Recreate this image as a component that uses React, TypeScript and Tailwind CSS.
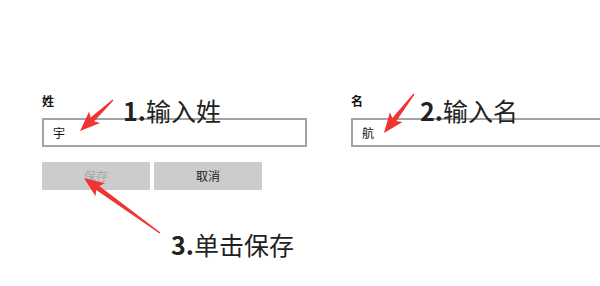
import React from 'react';

const cjk = { fontFamily: '"Microsoft YaHei", "Noto Sans CJK SC", "Noto Sans", sans-serif' };

type Pt = [number, number];

// tapered arrow from tail to tip, drawn as one polygon
function arrowPoints(tail: Pt, tip: Pt, headLen = 17, headW = 8, shaftW = 2.6) {
  const [x1, y1] = tail;
  const [x2, y2] = tip;
  const L = Math.hypot(x2 - x1, y2 - y1);
  const ux = (x2 - x1) / L;
  const uy = (y2 - y1) / L;
  const nx = -uy;
  const ny = ux;
  const bx = x2 - ux * headLen;
  const by = y2 - uy * headLen;
  const bx2 = x2 - ux * (headLen + 3);
  const by2 = y2 - uy * (headLen + 3);
  const pts: Pt[] = [
    [x1 + nx * 0.6, y1 + ny * 0.6],
    [bx + nx * shaftW, by + ny * shaftW],
    [bx2 + nx * headW, by2 + ny * headW],
    [x2, y2],
    [bx2 - nx * headW, by2 - ny * headW],
    [bx - nx * shaftW, by - ny * shaftW],
    [x1 - nx * 0.6, y1 - ny * 0.6],
  ];
  return pts.map(p => `${p[0].toFixed(1)},${p[1].toFixed(1)}`).join(' ');
}

function Field({ label, value, className }: { label: string; value: string; className: string }) {
  return (
    <div className={className}>
      <div className="text-[12px] font-bold leading-[14px] text-[#111] h-[14px]">{label}</div>
      <div className="mt-[10px] h-[29px] border-2 border-[#a3a3a3] bg-white flex items-center pl-[9px] text-[12px] text-[#111]">
        {value}
      </div>
    </div>
  );
}

export default function App() {
  return (
    <div className="relative w-[600px] h-[286px] bg-white overflow-hidden" style={cjk}>
      <div className="pt-[94px] pl-[42px] flex">
        <Field label="姓" value="宇" className="w-[265px] shrink-0" />
        <Field label="名" value="航" className="ml-[44px] w-[260px] shrink-0" />
      </div>

      <div className="pl-[42px] mt-[15px] flex gap-[4px]">
        <button className="w-[108px] h-[28px] bg-[#cccccc] text-[12px] text-[#a8a8a8]">保存</button>
        <button className="w-[108px] h-[28px] bg-[#cccccc] text-[12px] text-[#222]">取消</button>
      </div>

      {/* annotations */}
      <div className="absolute left-[123px] top-[94px] text-[25px] leading-[32px] text-[#222]">
        <span className="font-bold">1.</span>输入姓
      </div>
      <div className="absolute left-[420px] top-[94px] text-[25px] leading-[32px] text-[#222]">
        <span className="font-bold">2.</span>输入名
      </div>
      <div className="absolute left-[171px] top-[228px] text-[25px] leading-[32px] text-[#222]">
        <span className="font-bold">3.</span>单击保存
      </div>

      <svg className="absolute inset-0 pointer-events-none" width="600" height="286">
        <polygon points={arrowPoints([113, 100], [80, 131])} fill="#f03434" />
        <polygon points={arrowPoints([414, 94], [384, 133])} fill="#f03434" />
        <polygon points={arrowPoints([160, 233], [84, 178])} fill="#f03434" />
      </svg>
    </div>
  );
}
